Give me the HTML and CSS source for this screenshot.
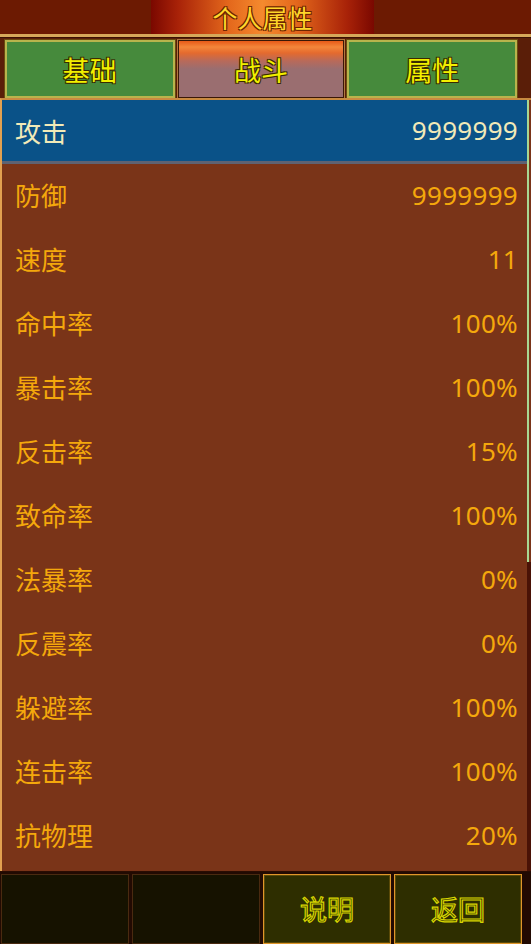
FILE: index.html
```html
<!DOCTYPE html>
<html lang="zh">
<head>
<meta charset="utf-8">
<title>个人属性</title>
<link rel="stylesheet" href="styles.css">
</head>
<body>
<div class="app">
  <header class="header">
    <div class="title-plate"><span class="title">个人属性</span></div>
  </header>
  <nav class="tabs">
    <div class="tab">基础</div>
    <div class="tab active"><span class="tab-label">战斗</span></div>
    <div class="tab">属性</div>
  </nav>
  <section class="list-wrap">
    <ul class="list">
      <li class="row selected"><span class="label">攻击</span><span class="value">9999999</span></li>
      <li class="row"><span class="label">防御</span><span class="value">9999999</span></li>
      <li class="row"><span class="label">速度</span><span class="value">11</span></li>
      <li class="row"><span class="label">命中率</span><span class="value">100%</span></li>
      <li class="row"><span class="label">暴击率</span><span class="value">100%</span></li>
      <li class="row"><span class="label">反击率</span><span class="value">15%</span></li>
      <li class="row"><span class="label">致命率</span><span class="value">100%</span></li>
      <li class="row"><span class="label">法暴率</span><span class="value">0%</span></li>
      <li class="row"><span class="label">反震率</span><span class="value">0%</span></li>
      <li class="row"><span class="label">躲避率</span><span class="value">100%</span></li>
      <li class="row"><span class="label">连击率</span><span class="value">100%</span></li>
      <li class="row"><span class="label">抗物理</span><span class="value">20%</span></li>
    </ul>
    <div class="scrollbar"><div class="thumb"></div></div>
  </section>
  <footer class="bottom">
    <div class="btn dark"></div>
    <div class="btn dark"></div>
    <div class="btn lit"><span class="hollow">说明</span></div>
    <div class="btn lit"><span class="hollow">返回</span></div>
  </footer>
</div>
</body>
</html>
```
FILE: styles.css
```css
* { box-sizing: border-box; }
html, body { margin: 0; padding: 0; }
body {
  width: 531px;
  height: 944px;
  overflow: hidden;
  background: #5a1e08;
  font-family: "Noto Sans", "Noto Sans CJK SC", sans-serif;
}
.app {
  display: flex;
  flex-direction: column;
  width: 531px;
  height: 944px;
}
.header {
  height: 37px;
  background: #6c1a02;
  border-bottom: 3px solid #d6a85a;
  display: flex;
  padding-left: 151px;
}
.title-plate {
  width: 223px;
  height: 34px;
  background: linear-gradient(to right, #7a0800 0%, #a82208 12%, #e4681c 35%, #f58a2e 50%, #e4681c 65%, #a82208 88%, #7a0800 100%);
  display: flex;
  align-items: center;
  justify-content: center;
}
.title {
  font-size: 25px;
  line-height: 32px;
  color: #ffd62a;
  font-family: "Noto Sans CJK SC", sans-serif;
  text-shadow: -1px -1px 0 #6a2400, 1px -1px 0 #6a2400, -1px 1px 0 #6a2400, 1px 1px 0 #6a2400;
}
.tabs {
  height: 61px;
  display: flex;
  gap: 3px;
  padding: 2px 14px 2px 5px;
  background: #5a1e08;
  border-top: 1px solid #3a1004;
}
.tab {
  width: 170px;
  height: 58px;
  background: #468a3c;
  border: 2px solid #b8b44c;
  box-shadow: 0 0 0 1px #6a4a10;
  display: flex;
  align-items: center;
  justify-content: center;
  font-size: 27px;
  color: #f2f000;
  font-family: "Noto Sans CJK SC", sans-serif;
  text-shadow: -1px -1px 0 #3a2a00, 1px -1px 0 #3a2a00, -1px 1px 0 #3a2a00, 1px 1px 0 #3a2a00;
}
.tab.active {
  width: 167px;
  border: 1px solid #3a1806;
  box-shadow: 0 0 0 1px #b07a40;
  background: linear-gradient(to bottom, #e85a18 0px, #f4863a 6px, #e46a2e 12px, #b86a5a 20px, #9a6e70 28px, #9a6e70 100%);
}
.tab-label { display: block; }
.list-wrap {
  height: 775px;
  display: flex;
  border-top: 2px solid #c88a40;
  border-left: 2px solid #e2a050;
  background: #7a3418;
  overflow: hidden;
}
.list {
  list-style: none;
  margin: 0;
  padding: 0;
  flex: 1;
}
.row {
  height: 64px;
  display: flex;
  align-items: center;
  justify-content: space-between;
  padding: 0 9px 3px 13px;
  font-size: 26px;
  color: #f4a80c;
  font-family: "Noto Sans", "Noto Sans CJK SC", sans-serif;
}
.row .label { font-family: "Noto Sans CJK SC", sans-serif; }
.row .value { letter-spacing: 0.3px; }
.row.selected {
  background: #0a5288;
  color: #f2eab8;
  border-bottom: 3px solid #5e6272;
  padding-bottom: 1px;
}
.scrollbar {
  width: 4px;
  background: #4a1206;
  display: flex;
  flex-direction: column;
}
.thumb {
  height: 462px;
  border-left: 2px solid #a8d892;
  background: #7a3418;
}
.bottom {
  flex: 1;
  display: flex;
  gap: 3px;
  padding: 2px 9px 0 1px;
  background: #220a02;
  border-top: 1px solid #2a0c02;
}
.btn {
  width: 129px;
  height: 70px;
  display: flex;
  align-items: center;
  justify-content: center;
}
.btn.dark {
  background: #161200;
  border: 1px solid #4a2a10;
}
.btn.lit {
  background: #2e2e00;
  border: 1px solid #e0962a;
  box-shadow: inset 0 0 0 1px #5a4a08;
}
.hollow {
  font-size: 27px;
  font-family: "Noto Sans CJK SC", sans-serif;
  color: #2e2e00;
  -webkit-text-stroke: 1.2px #d6d400;
  margin-top: -2px;
}
```
